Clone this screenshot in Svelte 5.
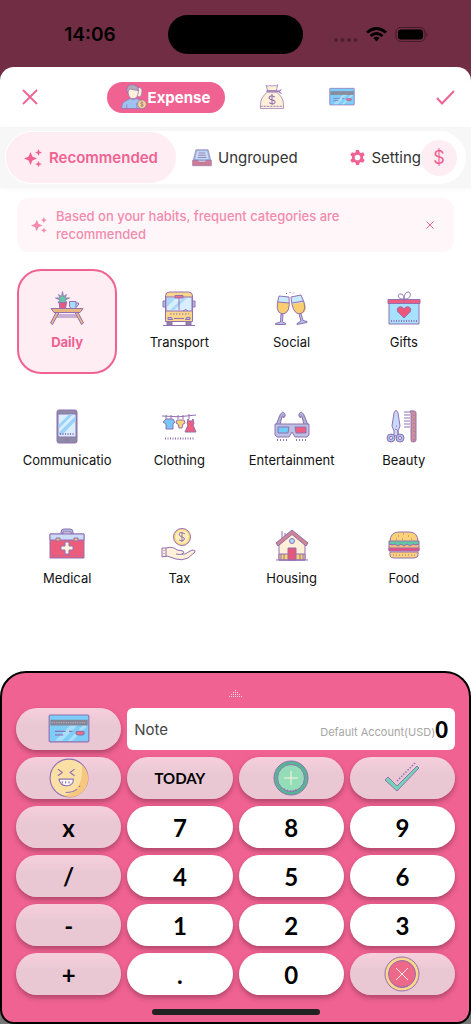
<script lang="ts">
    type Category = { name: string; icon: string };

    const icons: Record<string, string> = {
        table: `<path fill="#e9b77e" d="M2 17.500h32l-3 4H5zM7 21.500 1.500 32l2 1.500L10 21.500zM29 21.500 34.500 32l-2 1.500L26 21.500z"/><path fill="none" d="M8 26h20M9 24h18"/><path fill="#e8577f" d="M10 11.500h7.500l-1 6H11z"/><path fill="#66c6a7" stroke-width=".8" d="m13.500 11.500-4.500 0 2-2.500-4.500-2 4.500 0-1.500-3.500 3 2 1-5 1 5 3-2-1.500 3.500 4.500 0-4.500 2 2 2.500z"/><path fill="#a6dcfb" d="M20.500 10.500h6.500v7h-5l-1.500-2zM27 12h2.500v2L27 16"/>`,
        bus: `<path fill="#8d83a6" d="M6 30h5v4H6zM25 30h5v4h-5z"/><path fill="#fbd68a" d="M4.500 5q0-4 4-4h19q4 0 4 4v25.500h-27z"/><path fill="#d9efff" d="M5 6h26v14H5z"/><path fill="#aad8fa" stroke="none" d="M6 7h9L6 16zM22 7h4L13 19H9z"/><path fill="#e8718d" d="M14 4.500h8V7h-8z"/><path fill="#aac3ee" d="M2 10h2.500v6H2zM31.500 10H34v6h-2.500zM7 26.500h3.500l1 2H7zM29 26.500h-3.500l-1 2H29z"/><path fill="none" d="M18 7v12M13 27.500h10M2 34.500h32M22 20q3-3 5 0"/><path fill="none" stroke-dasharray="1.500 1.500" d="M9 23h19"/>`,
        glasses: `<path fill="#c8e8fc" stroke="none" d="m5 5 10 1 0 7-12-1zM17 6l10-2 4 8-12 2z"/><path fill="#f8ce70" stroke="none" d="m3 11 12.500 1q0 11-6.500 11-7-1-6-12zM18 13l12.500-2q4 10-4 12-7 0-8.500-10z"/><path fill="none" d="m5 5 10 1q2 17-7 17Q0 21 5 5zM17 6l10-2q8 16-1 19-8 0-9-17zM4 11l11 1M18 12l12-2"/><path fill="#aec6ed" d="m7 23-.5 8-5 1.500v1h10v-1l-3-1.500.5-8zM25 23l2 7-4 2.500v1l10-2v-1l-4-1-2-7z"/><path fill="none" d="m12 2 1 1m3-2v1m4-.5-1 1"/>`,
        gift: `<path fill="#a6e1ff" d="M3 11h30v22H3z"/><path fill="#ed5d7d" d="M2 8.500h32v4H2z"/><path fill="#ee5779" d="m18 27-6-6c-3-5 4-7 6-3 2-4 9-2 6 3z"/><path fill="none" d="M18 12V8C11 9 11 2 15 3c3 0 3 5 3 5s0-7 4-7 3 8-4 7"/><path fill="none" stroke-dasharray="1 1.500" stroke-width="2" d="M5 30h26"/>`,
        phone: `<rect x="8" y="1" width="20" height="33" rx="2" fill="#8c8ca4"/><path fill="#d9efff" d="M9 5h18v23H9z"/><path fill="#9cd2f8" stroke="none" d="M9.500 16 20 5.500h4L9.500 20zM9.500 24 26.500 7v5L13 26H9.500z"/><path fill="none" d="M16 31h4"/><path fill="none" stroke-width="2" stroke-dasharray="1 1.500" d="M11 25h15"/>`,
        clothes: `<path fill="none" d="M1 7q17 2 34-1M5 6v4m5-4v4m7-4v4m5-4v4m6-5v5"/><path fill="#78c6f3" d="M5 10h7l2 3-2 2v5H5v-5l-3-2z"/><path fill="#f8d274" d="M16 11h7l1 3-2 1-1 4h-3l-1-4-2-1z"/><path fill="#ed5e7f" d="m27 10 1 2h3l1-2 1 5-1 1 3 7H24l3-7-1-1z"/><path fill="none" stroke-width="2" stroke-dasharray="1 1.500" d="M4 29.500h30"/>`,
        cinema: `<path fill="#a6b7d9" d="m2 16 4-10q3-5 5-1 1 3-2 4 1-3-1-2L6 16zM34 16 30 6q-3-5-5-1-1 3 2 4-1-3 1-2l2 9z"/><path fill="#b9c2e2" d="M1 15h34v11l-2 2H21l-3-5-3 5H3l-2-2z"/><path fill="#72caf7" d="M4 18h11l-1 6H4z"/><path fill="#ee5d7f" d="M21 18h11v6H22z"/><path fill="none" stroke-dasharray="1 2" stroke-width="2" d="M3 31h12M22 31h12"/>`,
        beauty: `<path fill="#c6dafa" d="M8 22 6 17 8 4q2-5 4 0l2 13-2 5v5H8z"/><circle cx="5" cy="29" r="4" fill="#aac3ee"/><circle cx="14" cy="29" r="4" fill="#aac3ee"/><circle cx="5" cy="29" r="1.500" fill="#fff"/><circle cx="14" cy="29" r="1.500" fill="#fff"/><path fill="none" d="M9 20q4 1 3 5M10 17h1M18 3h6m-6 3h6m-6 3h6m-6 3h6m-6 3h6m-6 3h6"/><path fill="#cd8f96" d="M24 2q6-1 6 2v27q0 2-3 2-2 0-2-2V4z"/><path fill="none" stroke-dasharray="1 3" d="M28 6v25"/>`,
        medical: `<path fill="#aab7dc" d="M12 9V5q0-3 3-3h6q3 0 3 3v4h-2V5h-8v4z"/><path fill="#ee5c7c" d="M1 7h34v24H1z"/><path fill="#cadcf6" d="M1 7h34v6H1z"/><path fill="#f1bd68" d="M7 11h4v3H7zM25 11h4v3h-4z"/><path fill="#fff4df" d="M16 15h4v4h4v4h-4v4h-4v-4h-4v-4h4z"/><path fill="none" stroke-dasharray="1 2" d="M4 28.500h29"/>`,
        tax: `<circle cx="21" cy="10" r="8.500" fill="#fddb85"/><circle cx="21" cy="10" r="6.500" fill="#fff0bb" stroke="none"/><path fill="none" d="M24 7q-5-3-6 0 0 2 3 3 4 1 2 3-2 2-5 0M21 5v10"/><path fill="#fff0d9" d="M1 21h4q7-2 11 2l6 1q2 2-1 3h3l7-4q4 0 3 2l-7 6q-6 3-12 1l-9-3-5 1z"/><path fill="none" d="M15 27q4 1 7 0M5 21v9"/><path stroke-dasharray="1 2" d="M3 23v7"/>`,
        house: `<path fill="#fff0d8" d="M5 15 18 5l13 10v18H5z"/><path fill="#f8d274" d="M5 27h26v6H5z"/><path fill="#cd8591" d="M2 16 18 3l16 13-2 3L18 7.500 4 19z"/><path fill="#e85577" d="M14 21h8v12h-8z"/><circle cx="18" cy="14" r="2.500" fill="#aadcfb"/><path fill="none" d="M8 11V4m3 5V6M2 33h32M20 27v2M7 27v6m3-6v6m16-6v6m3-6v6"/>`,
        burger: `<path fill="#fbd276" d="M4 15Q4 5 13 5h10q9 0 9 10z"/><path fill="#f7b97b" d="M3 17h30v6H3z"/><path fill="#61c8a5" d="M3 14h30v3l-3 1-3-1-3 2-3-2-3 2-3-2-3 2-3-2-3 1-3-1z"/><path fill="#ed4e7d" d="M3 21h30v3H3z"/><path fill="#fbd276" d="M4 25h28v4q-2 2-4 2H8q-3 0-4-2z"/><path fill="none" stroke-dasharray="1 2" d="M7 28h23"/><path fill="none" d="M12 9h1m4-2h1m4 2h1m-7 3h1m-7 0h1m14 0h1"/>`,
        people: `<path fill="#fff0db" d="M22 5q8-1 7 6 0 6-4 7l-5-3z"/><path fill="#9fc3ef" d="M1 34q0-9 6-11l6-3q4 3 8 0l5 2q6 2 6 12z"/><path fill="#fff0db" d="M9 8q0-6 8-6 8 1 7 9-1 8-5 9-5 2-8-3z"/><path fill="#b1aab9" d="M8 9q0-8 7-8 9 0 9 8-8-1-11-2-3 1-4 5z"/><circle cx="29" cy="28" r="6" fill="#fbd77e"/><path fill="none" d="M31 26q-4-2-4 1l4 2q0 3-4 1m2-6v8M8 28v6m14-8v8"/>`,
        bag: `<path fill="#fff0d8" d="M10 2q3 2 5 0 3 2 6 0 3 2 5-1l-2 9H12z"/><path fill="#fff0d8" d="M12 11Q2 18 2 29v5h32v-5q0-11-10-18z"/><path fill="#bb9fc6" d="M11 9h14v2H11zM25 10l6-2-3 3 3 2z"/><path fill="none" stroke-width="1.500" d="M22 18q-7-3-8 1 0 2 4 3 5 1 4 4-2 3-8 0m4-12v15"/><path fill="none" stroke-dasharray="1 1" stroke-width="2" d="M3 31h30"/>`,
        card: `<rect x="1" y="6" width="34" height="23" rx="1" fill="#7ccdf8"/><path fill="#aadffb" stroke="none" d="M6 28 22 12h6L12 28zM17 28l16-16v4L21 28z"/><path fill="#858695" stroke="none" d="M2 10h32v5H2z"/><path fill="none" stroke="#b5aac0" stroke-dasharray="1 1" d="M3 12.500h30"/><path fill="none" d="M6 20h9m3 0h3M6 23h7"/><rect x="24" y="20" width="7" height="3" rx="1.500" fill="#f36d72"/>`,
        tray: `<path fill="#9bb6df" d="M7 3h22l5 20H2z"/><path fill="#c8dcf4" stroke="none" d="M9 6h18l3 14H6z"/><path fill="none" stroke-width="1.500" d="M12 9h12M11 13h14M10 17h16"/><path fill="#cf7e91" d="M1 22h9l2 3h12l2-3h9v10H1z"/><path fill="none" stroke-dasharray="1.500 2" d="M4 29h28"/>`,
        laugh: `<circle cx="18" cy="18" r="17" fill="#fae0a4"/><path fill="#f7c77e" stroke="none" d="M29.500 6A16.500 16.500 0 0 1 13 34Q32 30 29.500 6z"/><path fill="none" d="m8 10 4 3-4 3M23 10l-4 3 4 3M15 31q7 0 10-3m2-2 1-1"/><path fill="#fff" d="M9 19h13q0 6-6 6t-7-6z"/><path fill="none" d="M12 21v2m3-2v2m3-2v2"/>`,
        plus: `<circle cx="18" cy="18" r="17" fill="#54b693"/><circle cx="18" cy="18" r="13.500" fill="#93deb8"/><path fill="none" stroke="#fff3df" d="M18 11v14m-7-7h14"/><path fill="none" stroke-dasharray="1 2" stroke-width="2" d="M11 29q7 4 14 0"/>`,
        tick: `<path fill="#72d6b6" d="m1 20 3-3 9 9L33 6l2 2-22 23z"/><path fill="none" stroke-dasharray="1.500 1.500" stroke-width="1.500" d="M13 21 31 3"/>`,
        cancel: `<circle cx="18" cy="18" r="17" fill="#fbd78b"/><circle cx="18" cy="18" r="13.500" fill="#ee6989"/><path fill="none" stroke="#fff3df" d="m12 12 12 12m0-12L12 24"/><path fill="none" stroke-dasharray="1 2" stroke-width="2" d="M11 29q7 4 14 0"/>`
    };

    const categories: Category[] = [
        { name: "Daily", icon: "table" },
        { name: "Transport", icon: "bus" },
        { name: "Social", icon: "glasses" },
        { name: "Gifts", icon: "gift" },
        { name: "Communicatio", icon: "phone" },
        { name: "Clothing", icon: "clothes" },
        { name: "Entertainment", icon: "cinema" },
        { name: "Beauty", icon: "beauty" },
        { name: "Medical", icon: "medical" },
        { name: "Tax", icon: "tax" },
        { name: "Housing", icon: "house" },
        { name: "Food", icon: "burger" }
    ];

    const keys = ["x", "7", "8", "9", "/", "4", "5", "6", "-", "1", "2", "3", "+", ".", "0"];

    let selected = $state("Daily");
    let note = $state("");
    let amount = $state("0");
    let showTip = $state(true);

    function press(key: string) {
        amount = amount === "0" && key !== "." ? key : amount + key;
    }
</script>

{#snippet art(name: string, size: number)}
    <svg width={size} height={size} viewBox="0 0 36 36" stroke="#9270b2" stroke-width="1" stroke-linejoin="round" aria-hidden="true">
        {@html icons[name]}
    </svg>
{/snippet}

{#snippet sparkles(size: number)}
    <svg width={size} height={size} viewBox="0 0 18 18" fill="currentColor" aria-hidden="true">
        <path d="m6.500 3 1.900 4.600L13 9.500l-4.600 1.900L6.500 16l-1.900-4.600L0 9.500l4.600-1.900zM14.500 0l1 2.500 2.500 1-2.500 1-1 2.500-1-2.500-2.500-1 2.500-1zM14.500 12l1 2.200 2.500.8-2.500 1-1 2-1-2-2.500-1 2.500-.8z" />
    </svg>
{/snippet}

<div class="screen">
    <div class="status">
        <span class="time">14:06</span>
        <span class="island"></span>
        <div class="signals">
            <svg class="dots" width="24" height="4" viewBox="0 0 24 4" fill="#4e2030">
                <circle cx="2" cy="2" r="2" /><circle cx="8.500" cy="2" r="2" /><circle cx="15" cy="2" r="2" /><circle cx="21.500" cy="2" r="2" />
            </svg>
            <svg width="21" height="15" viewBox="0 0 21 15" fill="none" stroke="#000" stroke-width="2.800">
                <path d="M1 5.500q9.500-8 19 0M4.500 9q6-5 12 0" />
                <path d="M7.500 11q3-2.500 6 0l-3 3.500z" fill="#000" stroke="none" />
            </svg>
            <svg width="34" height="15" viewBox="0 0 34 15">
                <rect x="1" y=".5" width="29" height="14" rx="4.500" fill="none" stroke="#431a28" />
                <rect x="3" y="2.500" width="25" height="10" rx="3" />
                <path d="M31.500 5q2 2.500 0 5z" fill="#431a28" />
            </svg>
        </div>
    </div>

    <main class="sheet">
        <header>
            <button class="plain" aria-label="Close">
                <svg width="16" height="16" viewBox="0 0 16 16" fill="none" stroke="currentColor" stroke-width="1.800"><path d="m1 1 14 14M15 1 1 15" /></svg>
            </button>
            <nav class="kinds">
                <button class="kind active">{@render art("people", 26)}Expense</button>
                <button class="kind" aria-label="Income">{@render art("bag", 26)}</button>
                <button class="kind" aria-label="Transfer">{@render art("card", 26)}</button>
            </nav>
            <button class="plain" aria-label="Save">
                <svg width="19" height="15" viewBox="0 0 19 15" fill="none" stroke="currentColor" stroke-width="2"><path d="m1 8 5 5.500L18 1" /></svg>
            </button>
        </header>

        <div class="strip">
            <div class="groups">
                <div class="tabs">
                    <button class="tab current">{@render sparkles(18)}Recommended</button>
                    <button class="tab">{@render art("tray", 20)}Ungrouped</button>
                    <button class="tab settings">
                        <svg width="15" height="15" viewBox="0 0 24 24" fill="#f06292" fill-rule="evenodd" aria-hidden="true">
                            <path d="M9.500 0h5l.7 3.500 2.300 1.300L21 3.700l2.500 4.300-2.700 2.500v3l2.700 2.500-2.500 4.300-3.500-1.100-2.300 1.300-.7 3.500h-5l-.7-3.500-2.300-1.300L3 20.300.5 16l2.700-2.500v-3L.5 8 3 3.700l3.500 1.100 2.300-1.300zM12 7.500a4.500 4.500 0 1 0 0 9 4.500 4.500 0 0 0 0-9z" />
                        </svg>
                        Setting
                    </button>
                </div>
                <button class="currency">$</button>
            </div>
        </div>

        {#if showTip}
            <div class="tip">
                {@render sparkles(16)}
                <p>Based on your habits, frequent categories are recommended</p>
                <button class="plain" aria-label="Dismiss" onclick={() => (showTip = false)}>
                    <svg width="8" height="8" viewBox="0 0 8 8" fill="none" stroke="currentColor"><path d="m.5.5 7 7m0-7-7 7" /></svg>
                </button>
            </div>
        {/if}

        <div class="categories">
            {#each categories as category}
                <button class="category" class:selected={selected === category.name} onclick={() => (selected = category.name)}>
                    {@render art(category.icon, 36)}
                    <span>{category.name}</span>
                </button>
            {/each}
        </div>

        <section class="keypad">
            <button class="handle" aria-label="Expand">
                <svg width="13" height="7" viewBox="0 0 13 7" fill="none" stroke="#fbd5e2" stroke-dasharray="1 1">
                    <path d="M6 .5h1M4 2.500h5M2 4.500h9M0 6.500h13" />
                </svg>
            </button>
            <div class="keys">
                <button class="key soft" aria-label="Account">{@render art("card", 42)}</button>
                <div class="field">
                    <input type="text" placeholder="Note" aria-label="Note" bind:value={note} />
                    <span class="account">Default Account(USD)</span>
                    <output>{amount}</output>
                </div>
                <button class="key soft" aria-label="Mood">{@render art("laugh", 40)}</button>
                <button class="key soft today">TODAY</button>
                <button class="key soft" aria-label="Add">{@render art("plus", 36)}</button>
                <button class="key soft" aria-label="Done">{@render art("tick", 36)}</button>
                {#each keys as key, i}
                    <button class="key" class:soft={i % 4 === 0} onclick={() => press(key)}>{key}</button>
                {/each}
                <button class="key soft" aria-label="Clear" onclick={() => (amount = "0")}>{@render art("cancel", 36)}</button>
            </div>
            <div class="home"></div>
        </section>
    </main>
</div>

<style>
    :global(body) {
        background: #777;
    }

    .screen {
        display: flex;
        flex-direction: column;
        min-height: 100vh;
        background: linear-gradient(#702d43 120px, #777 120px);
        font-family: Inter, "Liberation Sans", sans-serif;
        color: #222;
    }

    button {
        display: flex;
        align-items: center;
        justify-content: center;
        padding: 0;
        border: 0;
        background: none;
        color: inherit;
        font: inherit;
        cursor: pointer;
    }

    svg {
        display: block;
        flex: none;
    }

    .status {
        display: grid;
        grid-template-columns: 1fr 135px 1fr;
        align-items: center;
        height: 67px;
        padding-top: 2px;
        box-sizing: border-box;
    }

    .time {
        padding-left: 12px;
        color: #000;
        font-size: 19px;
        font-weight: 600;
        text-align: center;
    }

    .island {
        height: 39px;
        border-radius: 20px;
        background: #000;
    }

    .signals {
        display: flex;
        align-items: center;
        gap: 8px;
        padding-left: 31px;
    }

    .dots {
        margin-top: 10px;
    }

    .sheet {
        display: flex;
        flex: 1;
        flex-direction: column;
        border-radius: 14px 14px 26px 26px;
        background: #fff;
    }

    header {
        display: flex;
        align-items: center;
        justify-content: space-between;
        height: 60px;
        padding: 0 12px 0 16px;
    }

    .plain {
        width: 28px;
        height: 28px;
        color: #f06292;
    }

    .kinds {
        display: flex;
        align-items: center;
        padding-left: 8px;
    }

    .kind {
        width: 70px;
        height: 31px;
    }

    .kind.active {
        gap: 1px;
        width: 118px;
        margin-right: 12px;
        border-radius: 16px;
        background: #f06292;
        color: #fff;
        font-size: 15px;
        font-weight: 700;
    }

    .strip {
        padding: 4px 5px;
        background: #f7f7f7;
        box-shadow: 0 1px 5px #f7f7f7;
    }

    .groups {
        display: flex;
        align-items: center;
        padding: 1px 9px 1px 1px;
        border-radius: 27px;
        background: #fff;
    }

    .tabs {
        display: flex;
        flex: 1;
        overflow: hidden;
        min-width: 0;
    }

    .tab {
        flex: none;
        gap: 6px;
        height: 51px;
        padding: 0 16px;
        border-radius: 26px;
        color: #333;
        font-size: 15px;
    }

    .tab.current {
        gap: 7px;
        padding: 0 18px;
        background: #feedf3;
        color: #f06292;
        font-weight: 600;
    }

    .tab.settings {
        margin-left: auto;
        padding: 0;
    }

    .currency {
        width: 36px;
        height: 36px;
        border-radius: 50%;
        background: #feedf3;
        color: #f06292;
        font-size: 18px;
    }

    .tip {
        display: flex;
        align-items: center;
        gap: 9px;
        margin: 10px 17px 0;
        padding: 9px 10px 9px 14px;
        border-radius: 12px;
        background: #fef6f9;
        color: #f38bad;
        font-size: 13px;
        font-weight: 500;
        line-height: 18px;
    }

    .tip p {
        flex: 1;
        margin: 0;
        padding-right: 32px;
    }

    .categories {
        display: grid;
        grid-template-columns: repeat(4, 1fr);
        gap: 13px 12px;
        padding: 17px;
    }

    .category {
        flex-direction: column;
        gap: 7px;
        min-width: 0;
        height: 105px;
        padding-bottom: 2px;
        border: 2px solid transparent;
        border-radius: 24px;
        color: #111;
        font-size: 13px;
        line-height: 16px;
    }

    .category.selected {
        border-color: #f06292;
        background: #feedf3;
        color: #f06292;
        font-weight: 700;
    }

    .keypad {
        margin-top: auto;
        padding: 0 14px;
        border: 2px solid #000;
        border-radius: 26px 26px 14px 14px;
        background: #f06292;
    }

    .handle {
        width: 100%;
        height: 35px;
        padding-top: 6px;
    }

    .keys {
        display: grid;
        grid-template-columns: repeat(4, 1fr);
        gap: 7px 6px;
    }

    .key {
        height: 42px;
        border-radius: 21px;
        background: #fff;
        box-shadow: 0 3px 5px rgba(80, 30, 50, 0.4);
        color: #000;
        font-family: Lato, sans-serif;
        font-size: 24px;
        font-weight: 700;
    }

    .soft {
        background: linear-gradient(#f7cfdc, #e9c8d4 40%);
    }

    .today {
        font-size: 15px;
    }

    .field {
        display: flex;
        grid-column: span 3;
        align-items: center;
        padding: 0 7px;
        border-radius: 6px;
        background: #fff;
    }

    input {
        flex: 1;
        min-width: 0;
        padding: 0;
        border: 0;
        outline: 0;
        background: none;
        color: #333;
        font: inherit;
        font-size: 15px;
    }

    input::placeholder {
        color: #444;
        opacity: 1;
    }

    .account {
        padding-top: 6px;
        color: #a5a5a5;
        font-size: 11px;
    }

    output {
        color: #000;
        font-family: Lato, sans-serif;
        font-size: 22px;
        font-weight: 900;
    }

    .home {
        width: 168px;
        height: 6px;
        margin: 14px auto 7px;
        border-radius: 3px;
        background: #222;
    }
</style>
